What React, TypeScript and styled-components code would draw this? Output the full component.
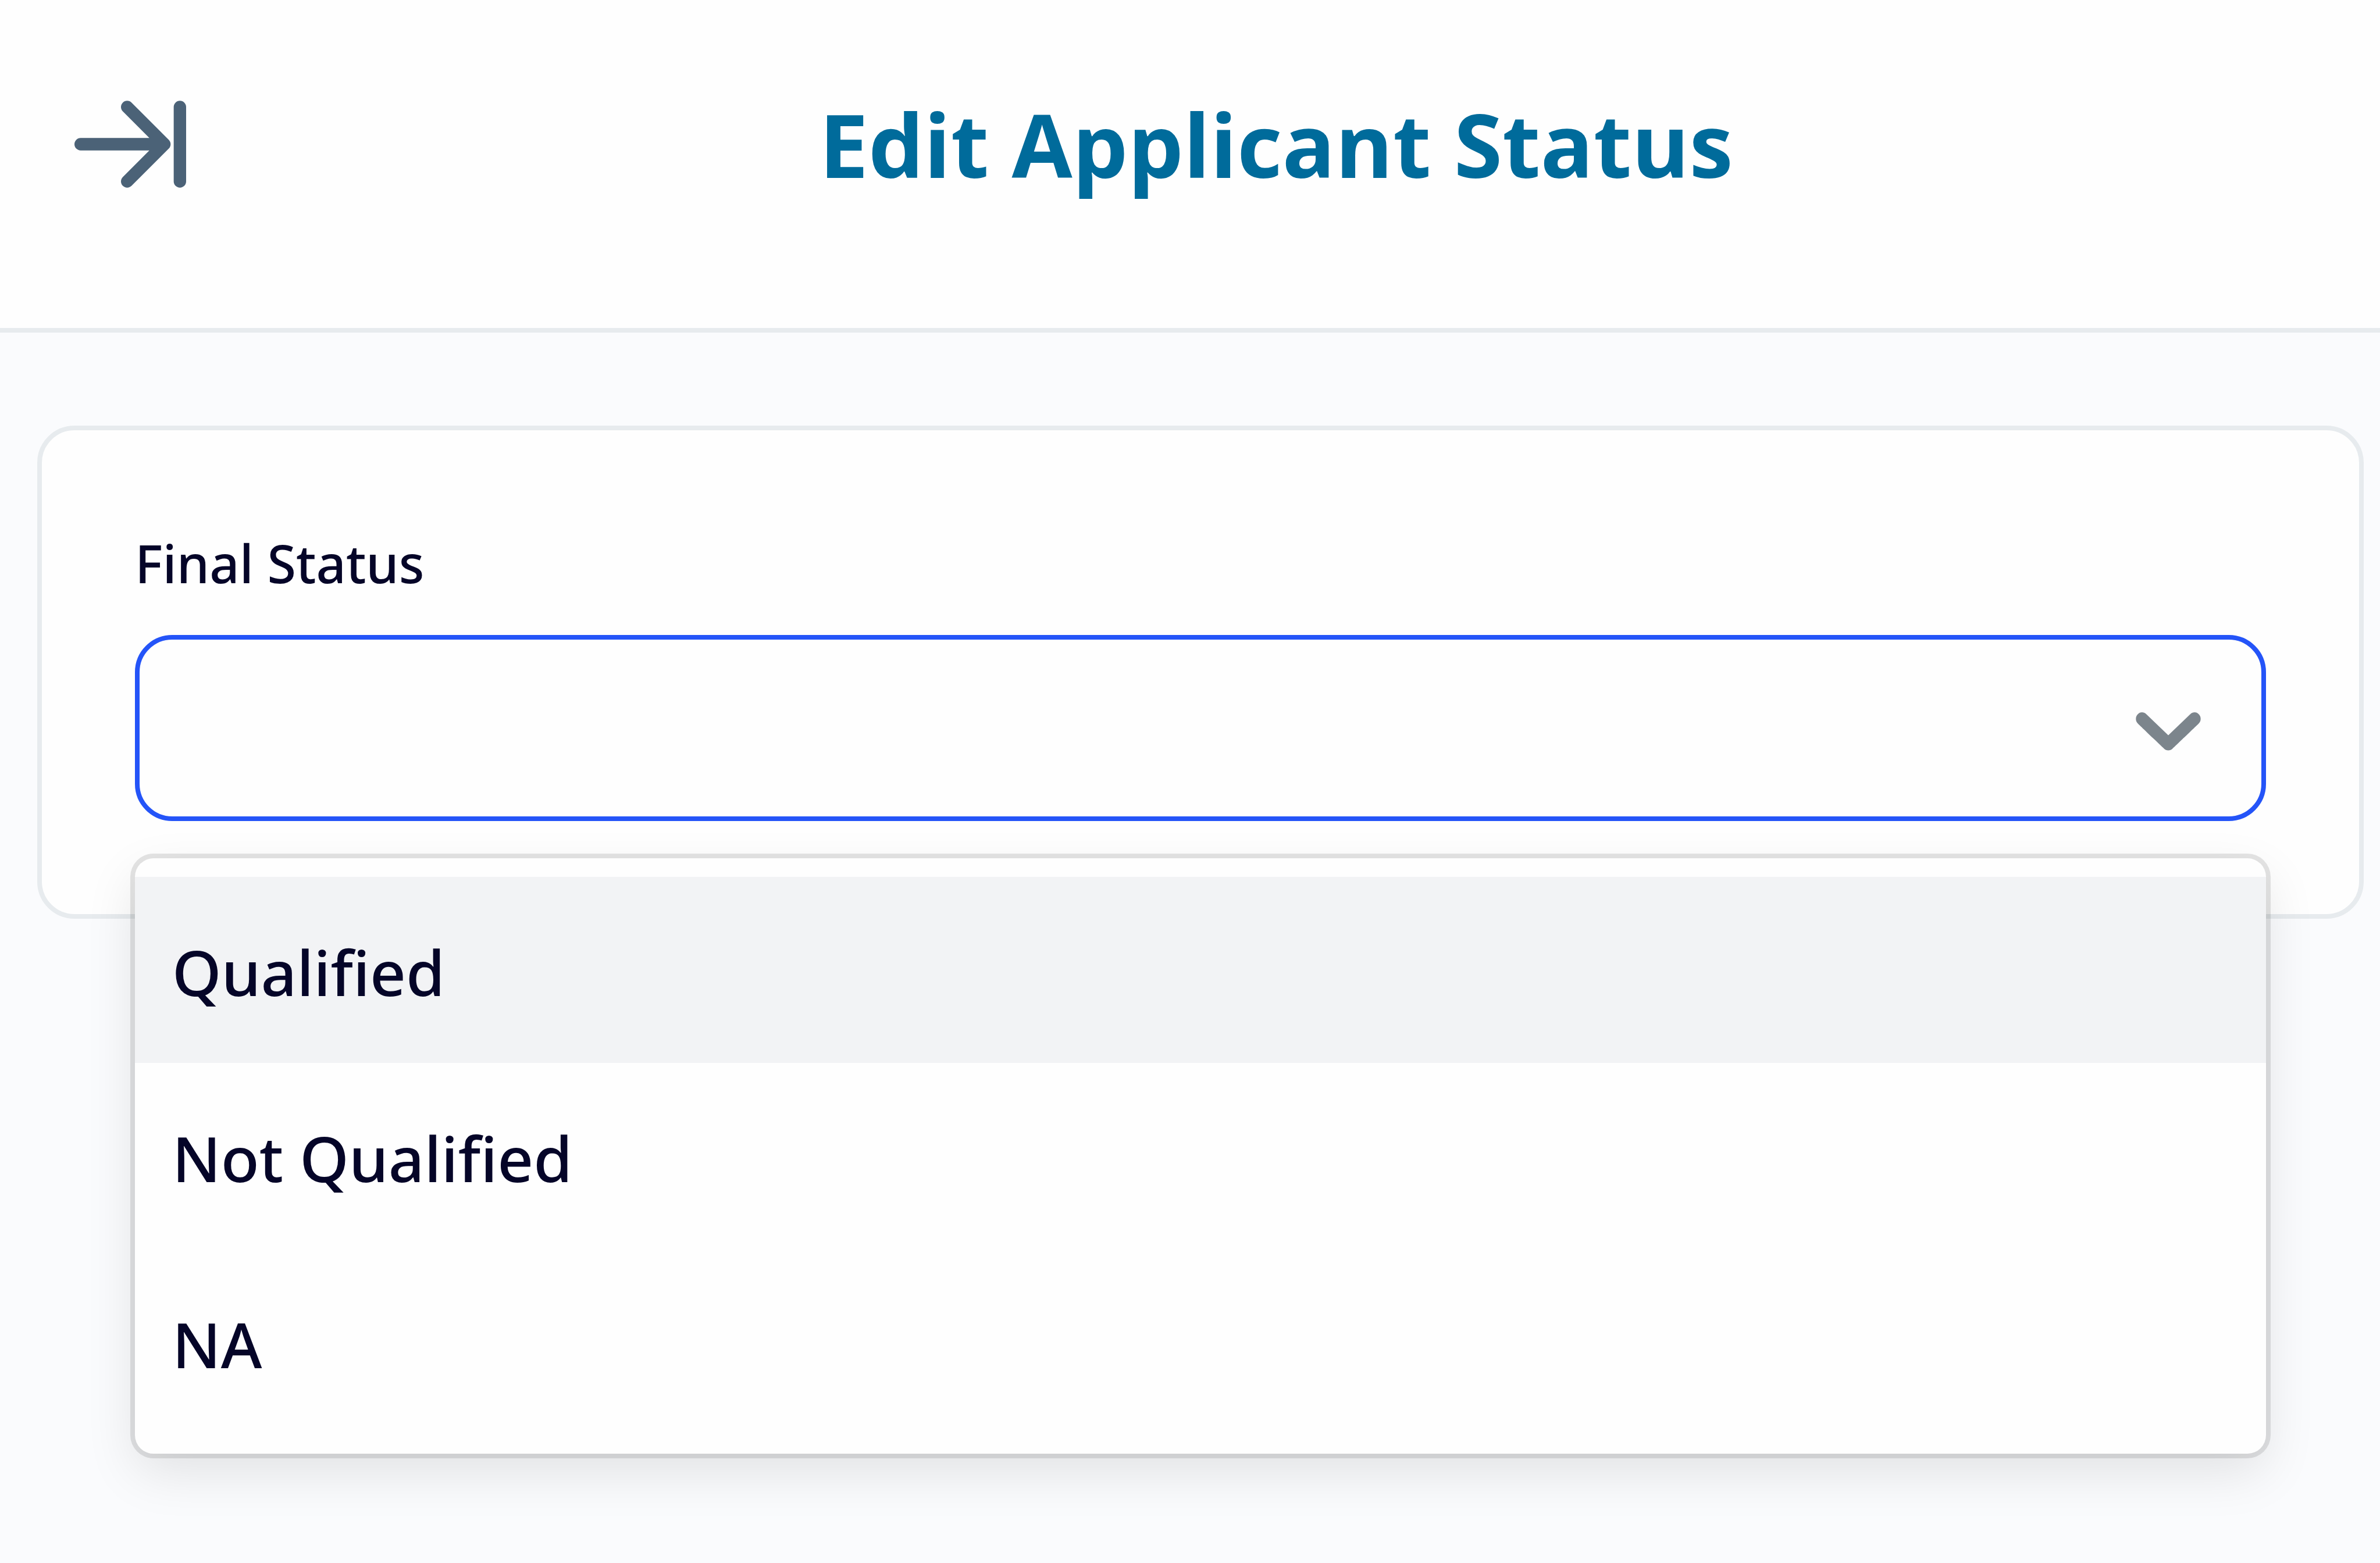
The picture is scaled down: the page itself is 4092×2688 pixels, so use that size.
import { useState } from "react";
import styled, { createGlobalStyle } from "styled-components";

const GlobalStyle = createGlobalStyle`
  *, *::before, *::after { box-sizing: border-box; }
  body {
    margin: 0;
    background: #fafbfd;
    color: #050528;
    font-family: "Noto Sans", "Open Sans", sans-serif;
  }
`;

const Page = styled.div`
  min-height: 100vh;
`;

const Header = styled.header`
  display: flex;
  align-items: center;
  gap: 40px;
  padding: 128px 64px 196px 128px;
  background: #fefefe;
  border-bottom: 8px solid #e7ebee;
`;

const IconButton = styled.button`
  display: flex;
  flex: none;
  padding: 0;
  border: 0;
  background: none;
  color: #4b6277;
  cursor: pointer;
`;

const Title = styled.h1`
  flex: 1;
  margin: 0;
  color: #006b9b;
  font-family: "Open Sans", "Noto Sans", sans-serif;
  font-size: 151px;
  font-weight: 700;
  line-height: 240px;
  text-align: center;
`;

const Content = styled.main`
  padding: 160px 28px 160px 64px;
`;

const Card = styled.section`
  padding: 160px;
  background: #fefefe;
  border: 8px solid #e7ebee;
  border-radius: 64px;
`;

const Label = styled.label`
  display: block;
  margin-bottom: 56px;
  font-size: 90px;
  font-weight: 500;
  line-height: 136px;
`;

const SelectBox = styled.div`
  position: relative;
  display: grid;
  align-items: center;
`;

const Select = styled.select`
  grid-area: 1 / 1;
  width: 100%;
  height: 320px;
  padding: 0 320px 0 56px;
  appearance: none;
  background: #fefefe;
  border: 8px solid #2454f8;
  border-radius: 64px;
  outline: none;
  color: inherit;
  font: inherit;
  font-size: 108px;
  font-weight: 500;
`;

const Chevron = styled.svg`
  grid-area: 1 / 1;
  justify-self: end;
  width: 192px;
  height: 192px;
  margin-right: 72px;
  color: #7c858c;
  pointer-events: none;
`;

const Menu = styled.ul`
  position: absolute;
  top: 100%;
  left: 0;
  right: 0;
  margin: 64px 0 0;
  padding: 32px 0;
  list-style: none;
  background: #fefefe;
  border-radius: 32px;
  box-shadow: 0 0 0 8px rgba(0, 0, 0, 0.1), 0 32px 88px rgba(0, 0, 0, 0.1);
`;

const Option = styled.li<{ $active: boolean }>`
  padding: 84px 64px 76px;
  background: ${({ $active }) => ($active ? "#f2f3f5" : "transparent")};
  font-size: 108px;
  font-weight: 500;
  line-height: 160px;
  cursor: pointer;
`;

const statuses = ["Qualified", "Not Qualified", "NA"];

function ArrowToRight() {
  return (
    <svg
      width="192"
      height="192"
      viewBox="0 0 18 18"
      fill="none"
      stroke="currentColor"
      strokeWidth="2"
      strokeLinecap="round"
      strokeLinejoin="round"
      aria-hidden="true"
    >
      <path d="M1 9h13.5M8.5 3l6 6-6 6M17 3v12" />
    </svg>
  );
}

export default function App() {
  const [status, setStatus] = useState("");
  const [active, setActive] = useState(0);
  const [open, setOpen] = useState(true);

  const choose = (value: string) => {
    setStatus(value);
    setOpen(false);
  };

  return (
    <Page>
      <GlobalStyle />
      <Header>
        <IconButton type="button" aria-label="Close panel">
          <ArrowToRight />
        </IconButton>
        <Title>Edit Applicant Status</Title>
      </Header>
      <Content>
        <Card>
          <Label htmlFor="final-status">Final Status</Label>
          <SelectBox>
            <Select id="final-status" value={status} onChange={(e) => choose(e.target.value)}>
              <option value="" />
              {statuses.map((s) => (
                <option key={s}>{s}</option>
              ))}
            </Select>
            <Chevron viewBox="0 0 20 20" fill="currentColor" aria-hidden="true">
              <path d="M4.516 7.548c0.436-0.446 1.043-0.481 1.576 0l3.908 3.747 3.908-3.747c0.533-0.481 1.141-0.446 1.574 0 0.436 0.445 0.408 1.197 0 1.615-0.406 0.418-4.695 4.502-4.695 4.502-0.217 0.223-0.502 0.335-0.787 0.335s-0.57-0.112-0.789-0.335c0 0-4.287-4.084-4.695-4.502s-0.436-1.17 0-1.615z" />
            </Chevron>
            {open && (
              <Menu role="listbox" aria-label="Final Status">
                {statuses.map((s, i) => (
                  <Option
                    key={s}
                    role="option"
                    aria-selected={s === status}
                    $active={i === active}
                    onMouseEnter={() => setActive(i)}
                    onClick={() => choose(s)}
                  >
                    {s}
                  </Option>
                ))}
              </Menu>
            )}
          </SelectBox>
        </Card>
      </Content>
    </Page>
  );
}
